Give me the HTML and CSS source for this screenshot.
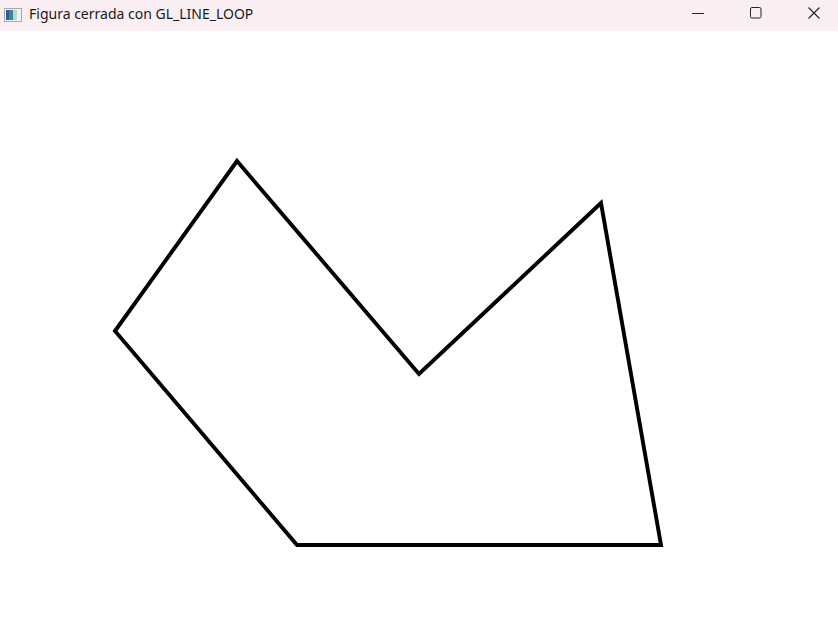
FILE: index.html
```html
<!DOCTYPE html>
<html>
<head>
<meta charset="utf-8">
<link rel="stylesheet" href="styles.css">
</head>
<body>
<div class="window">
  <div class="titlebar">
    <div class="title-left">
      <svg class="app-icon" width="18" height="16" viewBox="0 0 18 16">
        <rect x="0.5" y="1.5" width="17" height="13" fill="#f2f2f2" stroke="#a9a9a9"/>
        <rect x="2" y="3" width="7" height="10" fill="#3d8a8c"/>
        <rect x="2" y="3" width="3" height="10" fill="#2f5e9e"/>
        <rect x="9" y="3" width="4" height="10" fill="#b9d5d4"/>
      </svg>
      <span class="title">Figura cerrada con GL_LINE_LOOP</span>
    </div>
    <div class="controls">
      <div class="ctl">
        <svg width="14" height="14" viewBox="0 0 14 14"><line x1="1" y1="7.5" x2="13" y2="7.5" stroke="#222" stroke-width="1"/></svg>
      </div>
      <div class="ctl">
        <svg width="14" height="14" viewBox="0 0 14 14"><rect x="1.5" y="1.5" width="10.5" height="10.5" rx="1.5" fill="none" stroke="#222" stroke-width="1"/></svg>
      </div>
      <div class="ctl">
        <svg width="14" height="14" viewBox="0 0 14 14"><path d="M1.5 1.5 L12.5 12.5 M12.5 1.5 L1.5 12.5" stroke="#222" stroke-width="1.1" fill="none"/></svg>
      </div>
    </div>
  </div>
  <div class="canvas">
    <svg class="figure" width="838" height="588" viewBox="0 31 838 588">
      <polygon points="237,161 419,374 601,203 661,545 297,545 115,331" fill="none" stroke="#000" stroke-width="3.9" stroke-linejoin="miter"/>
    </svg>
  </div>
</div>
</body>
</html>
```
FILE: styles.css
```css
html, body {
  margin: 0;
  padding: 0;
  background: #ffffff;
  overflow: hidden;
}
.window {
  width: 838px;
  height: 619px;
  display: flex;
  flex-direction: column;
}
.titlebar {
  height: 31px;
  background: #f9eff2;
  display: flex;
  align-items: center;
  justify-content: space-between;
  flex-shrink: 0;
}
.title-left {
  display: flex;
  align-items: center;
  padding-left: 4px;
  gap: 7px;
}
.app-icon {
  display: block;
  margin-top: -2px;
}
.title {
  font-family: "Noto Sans", "Open Sans", sans-serif;
  font-size: 14px;
  color: #1a1a1a;
  margin-top: -4px;
}
.controls {
  display: flex;
  height: 100%;
  gap: 28px;
  padding-right: 9px;
}
.ctl {
  width: 30px;
  display: flex;
  align-items: center;
  justify-content: center;
  margin-top: -6px;
}
.ctl svg {
  display: block;
}
.canvas {
  flex: 1;
  background: #ffffff;
}
.figure {
  display: block;
}
```
